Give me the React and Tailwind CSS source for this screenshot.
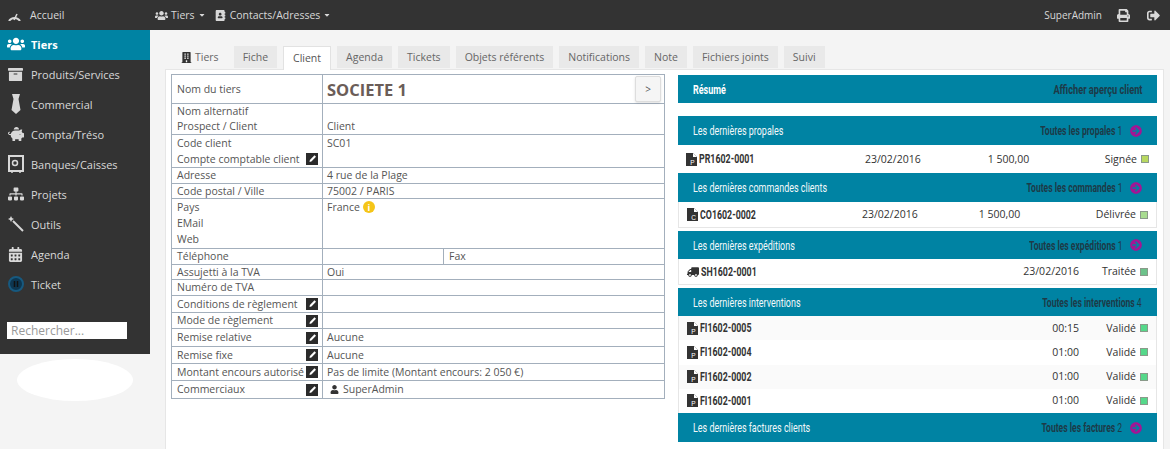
import {
  FaUsers, FaArchive, FaPiggyBank, FaSitemap, FaCalendarAlt,
  FaBuilding, FaPrint, FaSignOutAlt, FaUser, FaTruck, FaAddressBook, FaArrowCircleRight,
  FaCaretDown,
} from "react-icons/fa";

const sans = { fontFamily: '"Open Sans", sans-serif' };
const narrow = { fontFamily: 'Roboto, sans-serif' };

const GaugeIcon = () => (
  <svg width="15" height="11" viewBox="0 0 15 11" fill="none" stroke="currentColor" strokeWidth="2">
    <path d="M2 11A6.500 6.500 0 0 1 13 11" />
    <path d="M7 10l3-6" strokeWidth="1.500" />
  </svg>
);

const TieIcon = () => (
  <svg width="14" height="20" viewBox="0 0 14 20" fill="currentColor">
    <path d="M3 0h8l-1.500 5 2 11-4.500 4-4.500-4 2-11z" />
  </svg>
);

const SafeIcon = () => (
  <svg width="16" height="18" viewBox="0 0 16 18" fill="none" stroke="currentColor">
    <rect x="1" y="1" width="14" height="15" strokeWidth="2" />
    <circle cx="7" cy="8" r="2.500" strokeWidth="1.500" />
    <path d="M3 17h2M11 17h2" strokeWidth="1.500" />
  </svg>
);

const WandIcon = () => (
  <svg width="16" height="16" viewBox="0 0 16 16" fill="currentColor">
    <path d="M3 0l1 2 2 1-2 1-1 2-1-2-2-1 2-1z" />
    <path d="M5 5l10 10" stroke="currentColor" strokeWidth="2" />
  </svg>
);

const TicketIcon = () => (
  <svg width="16" height="16" viewBox="0 0 16 16">
    <circle cx="8" cy="8" r="7" fill="#0d3650" stroke="#17597f" strokeWidth="2" />
    <path d="M6.500 5v6M9.500 5v6" stroke="#111" strokeWidth="1.500" />
  </svg>
);

const FileIcon = ({ letter }) => (
  <svg width="11" height="13" viewBox="0 0 11 13" className="shrink-0">
    <path d="M0 0h7l4 4v9H0z" fill="#333" />
    <path d="M7 0v4h4" fill="#fff" />
    <text x="6.500" y="11.500" fontSize="6.500" fill="#fff" fontFamily="Liberation Sans, sans-serif" textAnchor="middle">{letter}</text>
  </svg>
);

const EditIcon = () => (
  <svg width="12" height="12" viewBox="0 0 12 12" className="shrink-0">
    <rect width="12" height="12" fill="#2b2b2b" />
    <path d="M3.500 9l.4-2L8.500 2.300l1.500 1.500L5.400 8.500z" fill="#fff" />
  </svg>
);

const menu = [
  { label: "Produits/Services", icon: <FaArchive size={15} /> },
  { label: "Commercial", icon: <TieIcon /> },
  { label: "Compta/Tréso", icon: <FaPiggyBank size={16} /> },
  { label: "Banques/Caisses", icon: <SafeIcon /> },
  { label: "Projets", icon: <FaSitemap size={16} /> },
  { label: "Outils", icon: <WandIcon /> },
  { label: "Agenda", icon: <FaCalendarAlt size={15} /> },
  { label: "Ticket", icon: <TicketIcon /> },
];

const tabs = ["Fiche", "Client", "Agenda", "Tickets", "Objets référents", "Notifications", "Note", "Fichiers joints", "Suivi"];

const Row = ({ h, lines, values = [], third }) => (
  <div className="flex border-b border-[#a3afbc]" style={{ height: h }}>
    <div className="w-[151px] shrink-0 border-r border-[#a3afbc] pl-[5px] pr-[4px] flex flex-col justify-around">
      {lines.map((l) => (
        <div key={l.text} className="flex items-center justify-between whitespace-nowrap">
          <span>{l.text}</span>
          {l.edit && <EditIcon />}
        </div>
      ))}
    </div>
    <div className={third ? "w-[121px] border-r border-[#a3afbc] pl-[4px]" : "flex-1 pl-[4px] flex flex-col justify-around"}>
      {lines.map((l, i) => (
        <div key={l.text} className="flex items-center whitespace-nowrap">{values[i] || "\u00a0"}</div>
      ))}
    </div>
    {third && <div className="flex-1 pl-[5px] flex items-center">{third}</div>}
  </div>
);

const Header = ({ title, link, count, bold, h = "h-[29px]", arrow = true, linkScale = "scale-x-[0.66]" }) => (
  <div className={`${h} shrink-0 bg-[#0083a3] flex items-center justify-between pl-[15px] pr-[15px] text-[13px] whitespace-nowrap`} style={narrow}>
    <span className={`inline-block origin-left scale-x-[0.69] ${bold ? "text-white font-bold" : "text-[#f2f8fa]"}`}>{title}</span>
    <span className="flex items-center text-[#1d3a47] font-bold">
      <span className={`inline-block origin-right ${linkScale}`}>
        {link}
        {count && <span className="ml-[3px] font-normal">{count}</span>}
      </span>
      {arrow && <FaArrowCircleRight size={12} className="ml-[8px] text-[#a51494]" />}
    </span>
  </div>
);

const DocRow = ({ icon, ref_, date, amount, status, color, refWidth = "", amountClass = "", striped }) => (
  <div className={`flex-1 flex items-center pl-[8px] pr-[8px] text-[10.5px] text-[#333] whitespace-nowrap ${striped ? "bg-[#fafafa]" : ""}`}>
    {icon}
    <span className={`ml-[2px] ${refWidth}`}>
      <span className="inline-block origin-left scale-x-[0.68] font-bold text-[13px]" style={narrow}>{ref_}</span>
    </span>
    {refWidth ? <span>{date}</span> : <span className="ml-auto">{date}</span>}
    {amount && <span className={amountClass}>{amount}</span>}
    <span className={refWidth ? "ml-auto w-[57px] text-right" : "w-[57px] text-right"}>{status}</span>
    <span className={`ml-[4px] w-[8px] h-[8px] border border-[#8a9a8a] ${color}`} />
  </div>
);

export default function App() {
  return (
    <div className="w-[1170px] h-[449px] overflow-hidden bg-[#f4f4f4] flex flex-col text-[10.5px] leading-[15px] text-[#555]" style={sans}>
      {/* top bar */}
      <div className="h-[30px] shrink-0 bg-[#333333] flex items-center text-[#d8d8d8]">
        <div className="w-[155px] flex items-center pl-[7px]">
          <GaugeIcon />
          <span className="ml-[8px]">Accueil</span>
        </div>
        <FaUsers size={13} />
        <span className="ml-[3px]">Tiers</span>
        <FaCaretDown size={8} className="ml-[3px]" />
        <FaAddressBook size={11} className="ml-[9px]" />
        <span className="ml-[4px]">Contacts/Adresses</span>
        <FaCaretDown size={8} className="ml-[3px]" />
        <span className="ml-auto text-[10px]">SuperAdmin</span>
        <FaPrint size={13} className="ml-[15px]" />
        <FaSignOutAlt size={13} className="ml-[17px] mr-[10px]" />
      </div>

      <div className="flex-1 flex min-h-0">
        {/* sidebar */}
        <div className="w-[150px] shrink-0 flex flex-col">
          <div className="h-[324px] bg-[#333333] text-[#d8d8d8] text-[11px]">
            <div className="h-[30px] pb-[2px] bg-[#0083a3] flex items-center pl-[4px] text-white font-bold">
              <span className="w-[23px] flex justify-center"><FaUsers size={18} /></span>
              <span className="ml-[4px]">Tiers</span>
            </div>
            {menu.map((m) => (
              <div key={m.label} className="h-[30px] pb-[2px] flex items-center pl-[4px]">
                <span className="w-[23px] flex justify-center">{m.icon}</span>
                <span className="ml-[4px]">{m.label}</span>
              </div>
            ))}
            <div className="ml-[7px] mt-[22px] w-[120px] h-[17px] bg-white text-[#999] text-[12px] pl-[4px] leading-[17px]">Rechercher...</div>
          </div>
          <div className="ml-[17px] mt-[5px] w-[116px] h-[42px] bg-white rounded-[50%]" />
        </div>

        {/* content */}
        <div className="flex-1 min-w-0 pl-[15px] pr-[6px] flex flex-col">
          <div className="h-[39px] shrink-0 flex items-end pl-[7px] gap-[6px] relative z-10">
            <div className="h-[23px] flex items-center pl-[9px] pr-[9px] text-[#666]">
              <FaBuilding size={11} className="text-[#333] mr-[3px]" />Tiers
            </div>
            {tabs.map((t) =>
              t === "Client" ? (
                <div key={t} className="h-[24px] -mb-px px-[9px] flex items-center bg-white border border-b-0 border-[#e2e2e2] text-[#555]">{t}</div>
              ) : (
                <div key={t} className="h-[22px] mb-px px-[9px] flex items-center bg-[#e9e9e9] text-[#666]">{t}</div>
              )
            )}
          </div>

          <div className="flex-1 min-h-0 bg-white border border-b-0 border-[#e6e6e6] flex pt-[4px] pl-[5px] pr-[6px] gap-[13px]">
            {/* client card */}
            <div className="w-[494px] shrink-0 self-start border border-b-0 border-[#a3afbc] bg-white">
              <div className="flex h-[29px] border-b border-[#a3afbc]">
                <div className="w-[151px] shrink-0 border-r border-[#a3afbc] pl-[5px] flex items-center">Nom du tiers</div>
                <div className="flex-1 pl-[4px] pr-[3px] flex items-center justify-between">
                  <span className="text-[16.5px] font-bold text-[#6b5d58]">SOCIETE 1</span>
                  <span className="w-[26px] h-[26px] bg-[#f5f5f5] border border-[#ddd] rounded-[2px] shadow-sm flex items-center justify-center text-[10px]">&gt;</span>
                </div>
              </div>
              <Row h={31} lines={[{ text: "Nom alternatif" }, { text: "Prospect / Client" }]} values={["", "Client"]} />
              <Row h={33} lines={[{ text: "Code client" }, { text: "Compte comptable client", edit: true }]} values={["SC01", ""]} />
              <Row h={16} lines={[{ text: "Adresse" }]} values={["4 rue de la Plage"]} />
              <Row h={15} lines={[{ text: "Code postal / Ville" }]} values={["75002 / PARIS"]} />
              <Row
                h={50}
                lines={[{ text: "Pays" }, { text: "EMail" }, { text: "Web" }]}
                values={[
                  <>France <span className="ml-[3px] w-[12px] h-[12px] rounded-full bg-[#f5c518] text-white text-[9px] font-bold flex items-center justify-center">i</span></>,
                ]}
              />
              <Row h={16} lines={[{ text: "Téléphone" }]} third="Fax" />
              <Row h={15} lines={[{ text: "Assujetti à la TVA" }]} values={["Oui"]} />
              <Row h={16} lines={[{ text: "Numéro de TVA" }]} />
              <Row h={17} lines={[{ text: "Conditions de règlement", edit: true }]} />
              <Row h={16} lines={[{ text: "Mode de règlement", edit: true }]} />
              <Row h={18} lines={[{ text: "Remise relative", edit: true }]} values={["Aucune"]} />
              <Row h={17} lines={[{ text: "Remise fixe", edit: true }]} values={["Aucune"]} />
              <Row h={17} lines={[{ text: "Montant encours autorisé", edit: true }]} values={["Pas de limite (Montant encours: 2 050 €)"]} />
              <Row
                h={18}
                lines={[{ text: "Commerciaux", edit: true }]}
                values={[<><FaUser size={9} className="ml-[3px] mr-[4px] text-[#333]" />SuperAdmin</>]}
              />
            </div>

            {/* summary boxes */}
            <div className="w-[479px] shrink-0 mt-[1px] flex flex-col">
              <Header title="Résumé" link="Afficher aperçu client" bold h="h-[28px]" arrow={false} linkScale="scale-x-[0.71]" />
              <div className="h-[13px] shrink-0" />
              <Header title="Les dernières propales" link="Toutes les propales" count="1" />
              <div className="h-[28px] flex flex-col shrink-0">
                <DocRow icon={<FileIcon letter="P" />} ref_="PR1602-0001" refWidth="w-[166px]" date="23/02/2016" amount="1 500,00" amountClass="ml-[67px]" status="Signée" color="bg-[#b8d860]" />
              </div>
              <Header title="Les dernières commandes clients" link="Toutes les commandes" count="1" />
              <div className="h-[26px] flex flex-col shrink-0 border-x border-b border-[#e6e6e6]">
                <DocRow icon={<FileIcon letter="C" />} ref_="CO1602-0002" refWidth="w-[162px]" date="23/02/2016" amount="1 500,00" amountClass="ml-[61px]" status="Délivrée" color="bg-[#a8dc90]" />
              </div>
              <div className="h-[3px] shrink-0" />
              <Header title="Les dernières expéditions" link="Toutes les expéditions" count="1" h="h-[28px]" />
              <div className="h-[26px] flex flex-col shrink-0 border-x border-b border-[#e6e6e6]">
                <DocRow icon={<FaTruck size={12} className="shrink-0 -scale-x-100" />} ref_="SH1602-0001" date="23/02/2016" status="Traitée" color="bg-[#6cc28a]" />
              </div>
              <div className="h-[3px] shrink-0" />
              <Header title="Les dernières interventions" link="Toutes les interventions" count="4" h="h-[28px]" arrow={false} />
              <div className="h-[97px] flex flex-col shrink-0 border-x border-[#e6e6e6]">
                <DocRow striped icon={<FileIcon letter="P" />} ref_="FI1602-0005" date="00:15" status="Validé" color="bg-[#55d88a]" />
                <DocRow icon={<FileIcon letter="P" />} ref_="FI1602-0004" date="01:00" status="Validé" color="bg-[#55d88a]" />
                <DocRow striped icon={<FileIcon letter="P" />} ref_="FI1602-0002" date="01:00" status="Validé" color="bg-[#55d88a]" />
                <DocRow icon={<FileIcon letter="P" />} ref_="FI1602-0001" date="01:00" status="Validé" color="bg-[#55d88a]" />
              </div>
              <Header title="Les dernières factures clients" link="Toutes les factures" count="2" />
            </div>
          </div>
        </div>
      </div>
    </div>
  );
}
